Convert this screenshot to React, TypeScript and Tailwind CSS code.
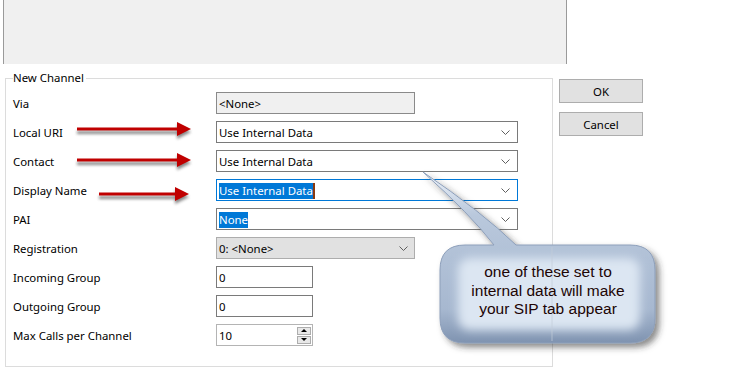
import type { ReactNode } from "react";

// "New Channel" dialog, with annotation arrows and a callout over it.

function Chevron() {
  return (
    <svg width="9" height="5" viewBox="0 0 9 5" className="shrink-0">
      <path d="M0.5 0.5 L4.5 4.5 L8.5 0.5" fill="none" stroke="#5f5f5f" strokeWidth="1" />
    </svg>
  );
}

function Combo({ children, focused }: { children: ReactNode; focused?: boolean }) {
  return (
    <div
      className={
        focused
          ? "flex h-[22px] w-[302px] items-center justify-between border border-[#0078d7] bg-white pl-[2px] pr-[7px]"
          : "flex h-[22px] w-[302px] items-center justify-between border border-[#7a7a7a] bg-white pl-[2px] pr-[7px]"
      }
    >
      <div className="flex items-center pt-[1px]">{children}</div>
      <Chevron />
    </div>
  );
}

function TextBox({ value }: { value: string }) {
  return (
    <div className="flex h-[22px] w-[97px] items-center border border-[#7a7a7a] bg-white pl-[2px] pt-[1px]">
      {value}
    </div>
  );
}

function Spin() {
  return (
    <div className="flex h-[22px] w-[97px] items-center justify-between border border-[#b4b4b4] bg-white pl-[2px] pr-[1px]">
      <span className="pt-[1px]">10</span>
      <div className="flex flex-col gap-[1px]">
        <div className="flex h-[8px] w-[14px] items-center justify-center border border-[#adadad] bg-[#e8e8e8]">
          <svg width="6" height="3" viewBox="0 0 6 3">
            <path d="M0 3 L3 0 L6 3 Z" fill="#000" />
          </svg>
        </div>
        <div className="flex h-[8px] w-[14px] items-center justify-center border border-[#adadad] bg-[#e8e8e8]">
          <svg width="6" height="3" viewBox="0 0 6 3">
            <path d="M0 0 L6 0 L3 3 Z" fill="#000" />
          </svg>
        </div>
      </div>
    </div>
  );
}

function Row({ label, children }: { label: string; children: ReactNode }) {
  return (
    <div className="flex h-[22px] items-center">
      <div className="w-[203px] shrink-0 pt-[2px]">{label}</div>
      {children}
    </div>
  );
}

function Arrow({ x1, x2, y }: { x1: number; x2: number; y: number }) {
  const hx = x2 - 14;
  return (
    <g>
      <g filter="url(#ashadow)" opacity="0.7">
        <rect x={x1} y={y + 2} width={hx - x1} height={3} fill="#555" />
        <path d={`M${hx} ${y - 4} L${x2} ${y + 3} L${hx} ${y + 10} Z`} fill="#555" />
      </g>
      <rect x={x1} y={y - 1.5} width={hx - x1 + 1} height={3} fill="#c00000" />
      <path d={`M${hx} ${y - 7} L${x2} ${y} L${hx} ${y + 7} Z`} fill="#c00000" />
    </g>
  );
}

export default function App() {
  return (
    <div className="relative h-[383px] w-[742px] overflow-hidden bg-white font-['Noto_Sans',sans-serif] text-[11.4px] text-black">
      <div className="ml-[3px] h-[64px] w-[564px] border-x border-x-[#9a9a9a] bg-[#f0f0f0]" />

      <div className="mt-[14px] flex items-start">
        <div className="ml-[5px] h-[289px] w-[548px] border border-[#dcdcdc] pl-[7px]">
          <div className="-mt-[9px] w-fit bg-white pr-[2px] leading-[16px]">New Channel</div>
          <div className="mt-[6px] flex flex-col gap-[7px]">
            <Row label="Via">
              <div className="flex h-[22px] w-[199px] items-center border border-[#8a8a8a] bg-[#f0f0f0] pl-[2px] pt-[1px]">
                &lt;None&gt;
              </div>
            </Row>
            <Row label="Local URI">
              <Combo>Use Internal Data</Combo>
            </Row>
            <Row label="Contact">
              <Combo>Use Internal Data</Combo>
            </Row>
            <Row label="Display Name">
              <Combo focused>
                <span className="bg-[#0078d7] leading-[16px] text-white">Use Internal Data</span>
                <span className="h-[16px] w-[2px] bg-[#8a3a10]" />
              </Combo>
            </Row>
            <Row label="PAI">
              <Combo>
                <span className="bg-[#0078d7] leading-[16px] text-white">None</span>
              </Combo>
            </Row>
            <Row label="Registration">
              <div className="flex h-[22px] w-[199px] items-center justify-between border border-[#adadad] bg-[#e1e1e1] pl-[2px] pr-[6px]">
                <span className="pt-[1px]">0: &lt;None&gt;</span>
                <Chevron />
              </div>
            </Row>
            <Row label="Incoming Group">
              <TextBox value="0" />
            </Row>
            <Row label="Outgoing Group">
              <TextBox value="0" />
            </Row>
            <Row label="Max Calls per Channel">
              <Spin />
            </Row>
          </div>
        </div>

        <div className="ml-[6px] mt-[1px] flex flex-col gap-[9px]">
          <button className="h-[24px] w-[84px] border border-[#adadad] bg-[#e1e1e1] pt-[1px]">OK</button>
          <button className="h-[24px] w-[84px] border border-[#adadad] bg-[#e1e1e1] pt-[1px]">Cancel</button>
        </div>
      </div>

      <svg className="pointer-events-none absolute left-0 top-0" width="742" height="383" viewBox="0 0 742 383">
        <defs>
          <filter id="ashadow" x="-20%" y="-100%" width="140%" height="300%">
            <feGaussianBlur stdDeviation="1.5" />
          </filter>
          <filter id="bshadow" x="-20%" y="-20%" width="140%" height="150%">
            <feDropShadow dx="4" dy="4" stdDeviation="3" floodColor="#333" floodOpacity="0.55" />
          </filter>
          <filter id="soft" x="-20%" y="-20%" width="140%" height="140%">
            <feGaussianBlur stdDeviation="5" />
          </filter>
          <linearGradient id="bfill" x1="0" y1="0" x2="0" y2="1">
            <stop offset="0" stopColor="#eef3fa" />
            <stop offset="0.25" stopColor="#b9c8dc" />
            <stop offset="0.8" stopColor="#a7b8d0" />
            <stop offset="1" stopColor="#7f93b0" />
          </linearGradient>
        </defs>

        <Arrow x1={77} x2={191} y={129} />
        <Arrow x1={77} x2={191} y={160} />
        <Arrow x1={99} x2={189} y={194} />

        <path
          d="M465 245 L494 245 Q470 214 423 172 Q482 212 516 245 L630 245 Q655 245 655 270 L655 318 Q655 343 630 343 L465 343 Q440 343 440 318 L440 270 Q440 245 465 245 Z"
          fill="url(#bfill)"
          stroke="#8d9fba"
          strokeWidth="1"
          filter="url(#bshadow)"
        />
        <rect x="458" y="258" width="182" height="72" rx="12" fill="#dce6f2" filter="url(#soft)" />
        <line x1="552" y1="247" x2="552" y2="341" stroke="#c2ccd9" strokeWidth="1" opacity="0.7" />
      </svg>

      <div className="pointer-events-none absolute left-[462px] top-[263px] w-[172px] text-center font-['Liberation_Sans',Arial,sans-serif] text-[15.5px] leading-[18.5px] text-[#200404]">
        one of these set to
        <br />
        internal data will make
        <br />
        your SIP tab appear
      </div>
    </div>
  );
}
